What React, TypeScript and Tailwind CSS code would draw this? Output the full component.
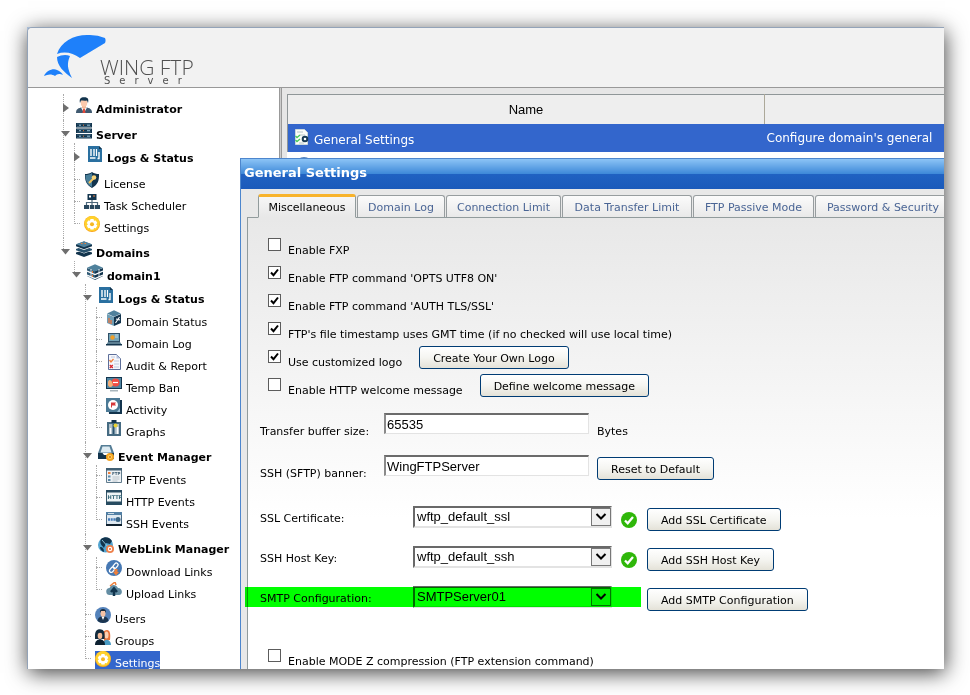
import type { ReactNode } from "react";

const navy = "#12344d";
const steel = "#4f819c";
const blue = "#2a70a0";
const orange = "#ee7f3b";

function Icon({ children }: { children: ReactNode }) {
  return (
    <svg viewBox="0 0 16 16" className="block h-4 w-4 shrink-0" aria-hidden="true">
      {children}
    </svg>
  );
}

const icons: Record<string, ReactNode> = {
  admin: (
    <>
      <path d="M0 16c0-3 1-4.500 5-5.500h6c4 1 5 2.500 5 5.500z" fill="#405a70" />
      <path d="M5 10.500 8 16l3-5.500z" fill="#fff" />
      <path d="M7.200 11.500h1.600L9.500 16h-3z" fill="#e0483a" />
      <path d="M6 8h4v3l-2 1-2-1z" fill="#f3b795" />
      <ellipse cx="8" cy="5.800" rx="3.300" ry="4" fill="#fbc9ad" />
      <path d="M4 6C3 1.500 5 0 8.500.200 12 .300 13 2 12 6l-1-2.500C9 4 6.500 3.500 5 3.500z" fill={navy} />
    </>
  ),
  server: (
    <>
      {[0, 5.5, 11].map((y) => (
        <g key={y}>
          <rect y={y} width="16" height="4.500" fill={navy} />
          <path d={`M1 ${y + 1}h14M1 ${y + 3.5}h14`} stroke="#557c95" strokeWidth=".6" />
          <path d={`M3 ${y + 2.2}h2M11 ${y + 2.2}h3`} stroke="#9bc4d8" />
          <path d={`M7 ${y + 2.2}h1`} stroke={orange} />
        </g>
      ))}
    </>
  ),
  logs: (
    <>
      <path d="M1 0h11l3 3v13H1z" fill={blue} />
      <path d="M12 0v3h3z" fill={navy} />
      <path d="M4 3v7M7 3v7M3 12h5.500" stroke="#fff" strokeWidth="1.400" />
      <path d="M9.500 3v7" stroke="#fff" strokeWidth="1.200" />
      <path d="M12 6v7M10.500 12.500h2" stroke="#fff" strokeWidth="1.400" />
    </>
  ),
  license: (
    <>
      <path d="M8 0c2 1.500 4.500 2 7 2 .3 7-1.500 11-7 14C2.500 13 .700 9 1 2c2.500 0 5-.500 7-2z" fill={navy} />
      <path d="M8 1C6 2.500 3.500 3 1.500 3 1.500 9 3 12.500 8 15z" fill="#487e99" />
      <path d="m5 11 4.500-4.500" stroke="#f3c45d" strokeWidth="2" />
      <circle cx="10" cy="5.500" r="2.300" fill="#f8d57c" />
    </>
  ),
  scheduler: (
    <>
      <path d="M8 6v4M2.500 11V8.500h11V11M8 8v3" fill="none" stroke="#4d687c" strokeWidth="1.200" />
      <rect x="3.500" width="9" height="6" fill={navy} />
      <path d="M5 1.500h2v2H5z" fill="#fff" />
      <path d="M9 2h2" stroke={orange} />
      <path d="M0 11h5v4H0zM5.800 11h4.500v4H5.800zM11 11h5v4h-5z" fill="#29485f" />
    </>
  ),
  gear: (
    <>
      <circle cx="8" cy="8" r="8" fill="#f9a51c" />
      <circle cx="8" cy="7.600" r="7.500" fill="#ffd12c" />
      <path d="m6.500 3h3l.5 1.700 1.800-.3 1.500 2.600L12 8.300l1.300 1.300-1.500 2.600-1.800-.3-.5 1.600h-3L6 11.900l-1.800.3-1.500-2.600L4 8.300 2.700 7l1.500-2.600 1.800.3z" fill="#fff" />
      <circle cx="8" cy="8.200" r="2" fill="#f6b722" />
    </>
  ),
  domains: (
    <>
      <path d="M0 11.500 8 9l8 2.500v1.500L8 16l-8-3z" fill={navy} />
      <path d="M0 7.800 8 5l8 2.800v1.700L8 12.500 0 9.500z" fill="#fff" />
      <path d="M0 8 8 5l8 3v1.300L8 12 0 9.300z" fill="#27506b" />
      <path d="M0 4 8 0l8 4v2L8 9 0 6z" fill="#fff" />
      <path d="M0 3.500 8 .500l8 3v1.700L8 8.200 0 5.200z" fill={navy} />
      <path d="M0 3.300 8 .300l8 3-8 3z" fill={steel} />
      <path d="M5 2.500h6" stroke={orange} strokeDasharray="1.500 2" />
    </>
  ),
  domain: (
    <>
      <path d="M0 4v8l8 4V7z" fill="#315b75" />
      <path d="M16 4v8l-8 4V7z" fill={navy} />
      <path d="M0 3.800 8 .300l8 3.500-8 3.700z" fill={steel} />
      <path d="m0 7 8 3.500L16 7M0 11l8 3.500 8-3.500" fill="none" stroke="#fff" strokeWidth="1.200" />
      <path d="M4 5v8M12 5v8" stroke="#fff" strokeWidth=".8" />
      <path d="M5.500 7v2M5.500 11v2" stroke={orange} />
    </>
  ),
  status: (
    <>
      <path d="M1 4v9l7 3V7z" fill="#6f9eb5" />
      <path d="M15 4v9l-7 3V7z" fill={navy} />
      <path d="m1 3.500 7-3.300 7 3.300-7 3.300z" fill={steel} />
      <path d="M3 8v5M5 10v4" stroke="#de7748" strokeWidth="1.400" />
      <path d="m9.500 13 4-6M10 9l4 1" stroke="#fff" strokeWidth="1.100" />
    </>
  ),
  laptop: (
    <>
      <rect x="2" y="1" width="12" height="9" fill="#2f5067" />
      <rect x="3" y="2" width="10" height="7" fill="#75a5b8" />
      <circle cx="6.500" cy="5.500" r="2.200" fill="#f09d25" />
      <path d="M9 3h3M9 5h3" stroke="#d7e6ec" strokeWidth=".8" />
      <path d="M2 10h12l2 3H0z" fill="#5c7f92" />
      <path d="M0 12h16v1.500H0z" fill={navy} />
    </>
  ),
  audit: (
    <>
      <path d="M2.500.500h8l4 4v11h-12z" fill="#f5f7fc" stroke="#5d6e99" />
      <path d="M10.500.500v4h4z" fill="#b5c2dd" />
      <path d="M8 7h5M8 10h5M8 13h5M5 3h4" stroke="#c0c8dc" />
      <path d="m3.500 6 1.500 2 2.500-3" fill="none" stroke={orange} strokeWidth="1.300" />
      <path d="m3.800 11 3 3m0-3-3 3" stroke="#d7262e" strokeWidth="1.300" />
    </>
  ),
  ban: (
    <>
      <path d="M0 1h16v12H0z" fill={navy} />
      <path d="M1 2h14v10H1z" fill="#4f85a2" />
      <path d="M4 14h8v1.500H4z" fill="#a9b6bd" />
      <circle cx="9.500" cy="6.500" r="4" fill="#f14d43" />
      <path d="M7 6.500h5" stroke="#fff" strokeWidth="1.200" />
      <path d="M2 6c1-3 3-2 4 0l1 3c-1 2.500-4 3-5 0z" fill="#f4ae77" />
    </>
  ),
  activity: (
    <>
      <path d="M2 2h14v14H3z" fill={navy} />
      <path d="M0 0h14v14H0z" fill="#4b7995" />
      <path d="m11 14 3-4v4z" fill="#9dc1d7" />
      <circle cx="7" cy="7" r="5" fill="#fff" />
      <path d="M5.500 4.500v5" stroke="#d6393b" />
      <path d="M6 4.500h4l-1 1.500 1 1.500H6z" fill="#d6393b" />
    </>
  ),
  graphs: (
    <>
      <path d="M1 2h14v14H1z" fill="#466b82" />
      <path d="M3 4h10v10H3z" fill="#aebfc9" />
      <path d="M5.500 0h5v3h-5z" fill={navy} />
      <path d="M4.500 14V8M11.500 14V7" stroke="#fff" strokeWidth="1.500" />
      <path d="M7.500 14V4" stroke="#29536f" strokeWidth="2" />
      <circle cx="9.500" cy="5.500" r="2" fill="#ead332" />
    </>
  ),
  events: (
    <>
      <path d="M3 0h10l3 8H0z" fill="#557d95" />
      <path d="M4.500 1.500h7l2 6h-11z" fill="#dceaf1" />
      <path d="M0 8h4.500l1.500 2h4l1.500-2H16v6H0z" fill={navy} />
      <circle cx="12" cy="12" r="4" fill="#f3a323" />
      <circle cx="12" cy="12" r="2" fill="#ffd85e" />
      <circle cx="12" cy="12" r="1" fill="#d5681f" />
    </>
  ),
  ftp: (
    <>
      <path d="M.500.500h15v14H.500z" fill="#eef2f5" stroke="#617b8c" />
      <path d="M0 0h16v2.500H0z" fill="#405f73" />
      <path d="M2 5h2.500" stroke={orange} strokeWidth="2" />
      <path d="M2 8.500h2.500M2 12h2.500" stroke="#5a89aa" strokeWidth="2" />
      <path d="M6.500 9h7M6.500 11h7M6.500 13h5" stroke="#aebac2" strokeWidth=".8" />
      <text x="6" y="7" fontSize="4" fontWeight="700" fontFamily="DejaVu Sans" fill="#405f73">FTP</text>
    </>
  ),
  http: (
    <>
      <path d="M.500.500h15v14H.500z" fill="#eef4f5" stroke="#365669" />
      <path d="M0 0h16v2.500H0zM0 11.500h16V15H0z" fill="#274b60" />
      <text x="1.500" y="8.500" fontSize="5" fontWeight="700" fontFamily="DejaVu Sans" fill="#366779">HTTP</text>
    </>
  ),
  ssh: (
    <>
      <path d="M.500.500h15v12H.500z" fill="#dfe9f1" stroke="#4b6b85" />
      <path d="M0 0h16v3H0z" fill="#5280a5" />
      <path d="M0 12h16v2H0z" fill="#0f202e" />
      <path d="M2 7.500h8" stroke="#4279b9" strokeWidth="2.500" strokeDasharray="2 .7" />
      <circle cx="12" cy="7.500" r="2.500" fill="#3b6585" />
      <path d="M2 1.500h6" stroke="#fff" strokeWidth=".7" />
    </>
  ),
  weblink: (
    <>
      <circle cx="7.500" cy="8" r="7.500" fill="#51a3cf" />
      <path d="M3 2C7-1 12 0 14 4l-2 3-4-1-2 5C4 8 1 7 3 2z" fill={navy} />
      <path d="M2 10c3 0 4 2 4 5-2-1-4-2-4-5z" fill={navy} />
      <path d="m4 3 7 8" stroke="#a4daf0" strokeWidth=".8" />
      <circle cx="12" cy="12" r="4" fill="#ee804b" />
      <circle cx="12" cy="12" r="2.200" fill="#fff" />
      <circle cx="12" cy="12" r="1" fill="#e46434" />
    </>
  ),
  download: (
    <>
      <circle cx="8" cy="8" r="8" fill="#4678b3" />
      <g fill="none" stroke="#fff" strokeWidth="1.300">
        <rect x="3" y="8" width="6" height="3.500" rx="1.700" transform="rotate(-50 6 9.700)" />
        <rect x="6.500" y="4" width="6" height="3.500" rx="1.700" transform="rotate(-50 9.500 5.700)" />
      </g>
      <path d="M8.500 9h3v3H13l-3 3.500L7 12h1.500z" fill={orange} />
    </>
  ),
  upload: (
    <>
      <path d="M4 13a3.500 3.500 0 0 1-.5-7C5 2 10 2 12 6c5 0 5 7 1 7z" fill="#638da3" />
      <path d="M8 14V8M5 10l3-3.500 3 3.500" fill="none" stroke={navy} strokeWidth="2.500" />
      <path d="m4 4 5-4 1 3" fill="none" stroke={orange} strokeWidth="1.500" />
    </>
  ),
  user: (
    <>
      <circle cx="8" cy="8" r="8" fill="#5482ba" />
      <path d="M2.500 14c.3-3 2-4 4-4.500h3c2 .5 3.700 1.500 4 4.500-3 2.500-8 2.500-11 0z" fill="#1b3550" />
      <path d="M6.500 9.500 8 13l1.500-3.500z" fill="#fff" />
      <ellipse cx="8" cy="6.500" rx="2.500" ry="3.200" fill="#f6c3a5" />
      <path d="M5 6c-.5-3 1-4 3-4s3.500 1 3 4l-1-2H6z" fill="#1b2d3d" />
    </>
  ),
  groups: (
    <>
      <path d="M9 2c5-3 7 0 6 9l-6 1z" fill="#e8733a" />
      <ellipse cx="11.500" cy="6" rx="2" ry="3.500" fill="#fbd0b2" />
      <path d="M8 16c0-3 1-4.500 3.500-5.500 3 1 4.500 2.500 4.500 5.500z" fill="#4a9cc4" />
      <path d="M0 10C-.5 3 1 .500 5 .300 9 .500 10 3 9.500 10z" fill="#132b3d" />
      <ellipse cx="5" cy="6.500" rx="2.300" ry="3.500" fill="#f5bd9b" />
      <path d="M2.500 6C3 3 7 3 7.700 6V3L5 1 2.500 3z" fill="#132b3d" />
      <path d="M0 16c0-4 2-5 5-6 3 1 5 2 5 6z" fill="#0d2131" />
    </>
  ),
  page: (
    <>
      <path d="M1.500.500h9l3 3v12h-12z" fill="#fbfdf9" stroke="#ccd8dc" />
      <path d="M3 3h6M6 6h5M5 14h5" stroke="#b6c4c9" />
      <path d="m1.500 7 1.500 1.500L6 6M1.500 11 3 12.500 6 10" fill="none" stroke="#48c858" strokeWidth="1.300" />
      <circle cx="11" cy="10" r="2.300" fill="#fff" stroke="#183b55" strokeWidth="2" />
    </>
  ),
};

type Node = { label: string; icon: string; open?: boolean; folder?: boolean; selected?: boolean; items?: Node[] };

const leaf = (label: string, icon: string): Node => ({ label, icon });

const tree: Node[] = [
  { label: "Administrator", icon: "admin", folder: true },
  {
    label: "Server", icon: "server", folder: true, open: true,
    items: [
      { label: "Logs & Status", icon: "logs", folder: true },
      leaf("License", "license"),
      leaf("Task Scheduler", "scheduler"),
      leaf("Settings", "gear"),
    ],
  },
  {
    label: "Domains", icon: "domains", folder: true, open: true,
    items: [
      {
        label: "domain1", icon: "domain", folder: true, open: true,
        items: [
          {
            label: "Logs & Status", icon: "logs", folder: true, open: true,
            items: [
              leaf("Domain Status", "status"),
              leaf("Domain Log", "laptop"),
              leaf("Audit & Report", "audit"),
              leaf("Temp Ban", "ban"),
              leaf("Activity", "activity"),
              leaf("Graphs", "graphs"),
            ],
          },
          {
            label: "Event Manager", icon: "events", folder: true, open: true,
            items: [leaf("FTP Events", "ftp"), leaf("HTTP Events", "http"), leaf("SSH Events", "ssh")],
          },
          {
            label: "WebLink Manager", icon: "weblink", folder: true, open: true,
            items: [leaf("Download Links", "download"), leaf("Upload Links", "upload")],
          },
          leaf("Users", "user"),
          leaf("Groups", "groups"),
          { label: "Settings", icon: "gear", selected: true },
        ],
      },
    ],
  },
];

function Branch({ nodes }: { nodes: Node[] }) {
  return (
    <ul>
      {nodes.map((n) => (
        <li
          key={n.label}
          className="relative before:absolute before:top-0 before:left-[2px] before:h-full before:border-l before:border-dotted before:border-[#aaa] last:before:h-[11px]"
        >
          {n.folder ? (
            <div className={n.open ? "flex h-[23px] items-start" : "flex h-[26px] items-start"}>
              <button type="button" aria-label={`Toggle ${n.label}`} className="relative mt-[9px] mr-[5px]">
                <svg viewBox="0 0 10 10" className="block h-[10px] w-[10px]" aria-hidden="true">
                  <path d={n.open ? "M0 2h9L4.500 7.500z" : "M2 .500v9L8 5z"} fill="#6e6e6e" />
                </svg>
              </button>
              <a href="#" className="mt-[3px] flex items-start gap-1 font-bold">
                <Icon>{icons[n.icon]}</Icon>
                <span className="pt-[6px] whitespace-nowrap">{n.label}</span>
              </a>
            </div>
          ) : (
            <div className="flex h-[22px] items-start pl-[2px]">
              <span className="mt-[10px] mr-1 w-[6px] border-t border-dotted border-[#aaa]" />
              <a
                href="#"
                className={
                  n.selected
                    ? "mt-[3px] flex items-start gap-1 bg-[#3366cc] pb-1 text-white"
                    : "mt-[3px] flex items-start gap-1"
                }
              >
                <Icon>{icons[n.icon]}</Icon>
                <span className="pt-[6px] whitespace-nowrap">{n.label}</span>
              </a>
            </div>
          )}
          {n.items && (
            <div className={n.label === "Domains" ? "pl-[11px]" : "pb-[3px] pl-[11px]"}>
              <Branch nodes={n.items} />
            </div>
          )}
        </li>
      ))}
    </ul>
  );
}

function Btn({ children }: { children: ReactNode }) {
  return (
    <button
      type="button"
      className="h-[23px] shrink-0 rounded-[3px] border border-[#003c74] bg-linear-to-b from-white via-[#f5f5f1] to-[#e4e2d8] px-[13px] pt-px whitespace-nowrap"
    >
      {children}
    </button>
  );
}

function Check({ id, label, checked = false, children }: { id: string; label: string; checked?: boolean; children?: ReactNode }) {
  return (
    <div className="flex h-[28px] items-start pl-2">
      <span className="relative mt-1 block h-[13px] w-[13px] shrink-0">
        <input
          id={id}
          type="checkbox"
          defaultChecked={checked}
          className="peer block h-[13px] w-[13px] appearance-none border border-[#5c5c5c] bg-white"
        />
        <svg
          viewBox="0 0 13 13"
          className="pointer-events-none absolute inset-0 hidden h-[13px] w-[13px] peer-checked:block"
          aria-hidden="true"
        >
          <path d="m3 6.500 2.500 2.700L10 3.500" fill="none" stroke="#000" strokeWidth="2" />
        </svg>
      </span>
      <label htmlFor={id} className="ml-[7px] pt-[10px] pr-[17px] whitespace-nowrap">{label}</label>
      {children}
    </div>
  );
}

function TextRow({ id, label, value, children }: { id: string; label: string; value: string; children: ReactNode }) {
  return (
    <div className="flex h-[42px] items-start">
      <label htmlFor={id} className="w-[124px] shrink-0 pt-[12px] whitespace-nowrap">{label}</label>
      <input
        id={id}
        type="text"
        defaultValue={value}
        className="mr-2 h-[21px] w-[205px] border-t-2 border-r border-b border-l-2 border-t-[#6b6b6b] border-r-[#e3e3e3] border-b-[#e3e3e3] border-l-[#8a8a8a] bg-white pl-px font-['Liberation_Sans',Arial,sans-serif] text-[13px]"
      />
      {children}
    </div>
  );
}

function SelectRow({ id, label, value, ok = false, button }: { id: string; label: string; value: string; ok?: boolean; button: string }) {
  return (
    <div className="relative flex h-[40px] items-start">
      <label htmlFor={id} className="w-[153px] shrink-0 pt-[6px] whitespace-nowrap">{label}</label>
      <div className="relative h-[22px] w-[199px] shrink-0">
        <select
          id={id}
          defaultValue={value}
          className="block h-[22px] w-full appearance-none border-2 border-t-[#696969] border-r-[#e3e3e3] border-b-[#e3e3e3] border-l-[#696969] bg-white pl-[2px] font-['Liberation_Sans',Arial,sans-serif] text-[13px] leading-[18px]"
        >
          <option>{value}</option>
        </select>
        <span className="pointer-events-none absolute top-[2px] right-px flex h-[18px] w-[20px] items-center justify-center border border-[#777] bg-[#f0f0f0]">
          <svg viewBox="0 0 12 8" className="h-[8px] w-[12px]" aria-hidden="true">
            <path d="m1.500 1 4.500 4.500L10.500 1" fill="none" stroke="#000" strokeWidth="2" />
          </svg>
        </span>
      </div>
      <span className="mx-[9px] mt-[6px] h-4 w-[17px] shrink-0">
        {ok && (
          <Icon>
            <circle cx="8" cy="8" r="8" fill="#2fb70a" />
            <path d="m4 8.500 2.700 2.700L12 5" fill="none" stroke="#fff" strokeWidth="2.300" />
          </Icon>
        )}
      </span>
      <div className="pt-[2px]"><Btn>{button}</Btn></div>
      {!ok && <span className="pointer-events-none absolute top-px -left-[15px] h-5 w-[396px] bg-[#00ff00] mix-blend-multiply" />}
    </div>
  );
}

const tabs = [
  { label: "Domain Log", width: "w-[88px]" },
  { label: "Connection Limit", width: "w-[115px]" },
  { label: "Data Transfer Limit", width: "w-[130px]" },
  { label: "FTP Passive Mode", width: "w-[121px]" },
  { label: "Password & Security", width: "w-[136px]" },
];

function SettingsWindow() {
  return (
    <section
      aria-label="General Settings"
      className="absolute top-[130px] right-0 bottom-0 left-[212px] flex flex-col overflow-hidden border-t border-l border-[#4d86cd] bg-[#e8e8e8]"
    >
      <h2 className="h-[30px] shrink-0 bg-[linear-gradient(#8cc4f6,#3d88d8_50%,#2062c2_51%,#1b5aba)] pl-[3px] text-[13px] leading-[27px] font-bold text-white">
        General Settings
      </h2>
      <div role="tablist" className="relative z-10 flex shrink-0 items-end gap-px pt-[5px] pl-[17px]">
        <button
          type="button"
          role="tab"
          aria-selected="true"
          className="-mb-px h-[24px] w-[98px] shrink-0 rounded-t-[3px] border border-t-[3px] border-[#919b9c] border-t-[#f8b32b] border-b-[#e8e8e8] bg-linear-to-b from-[#f6f6f6] to-[#e8e8e8] whitespace-nowrap"
        >
          Miscellaneous
        </button>
        {tabs.map((t) => (
          <button
            key={t.label}
            type="button"
            role="tab"
            aria-selected="false"
            className={`${t.width} h-[22px] shrink-0 rounded-t-[3px] border border-b-0 border-[#979d9f] bg-linear-to-b from-[#fbfbfb] to-[#e9e9e9] pt-px whitespace-nowrap text-[#4a6595]`}
          >
            {t.label}
          </button>
        ))}
      </div>
      <form className="ml-[6px] flex-1 border-t border-l border-[#919b9c] bg-[linear-gradient(#e8e8e8,#fff_300px)] pt-4 pl-3">
        <Check id="fxp" label="Enable FXP" />
        <Check id="utf8" label="Enable FTP command 'OPTS UTF8 ON'" checked />
        <Check id="tls" label="Enable FTP command 'AUTH TLS/SSL'" checked />
        <Check id="gmt" label="FTP's file timestamp uses GMT time (if no checked will use local time)" checked />
        <Check id="logo" label="Use customized logo" checked>
          <Btn>Create Your Own Logo</Btn>
        </Check>
        <Check id="welcome" label="Enable HTTP welcome message">
          <Btn>Define welcome message</Btn>
        </Check>
        <div className="pt-[11px] pb-[9px]">
          <TextRow id="buffer" label="Transfer buffer size:" value="65535">
            <span className="pt-[12px]">Bytes</span>
          </TextRow>
          <TextRow id="banner" label="SSH (SFTP) banner:" value="WingFTPServer">
            <div className="pt-[2px]"><Btn>Reset to Default</Btn></div>
          </TextRow>
        </div>
        <SelectRow id="ssl" label="SSL Certificate:" value="wftp_default_ssl" ok button="Add SSL Certificate" />
        <SelectRow id="ssh" label="SSH Host Key:" value="wftp_default_ssh" ok button="Add SSH Host Key" />
        <SelectRow id="smtp" label="SMTP Configuration:" value="SMTPServer01" button="Add SMTP Configuration" />
        <div className="pt-[19px]">
          <Check id="modez" label="Enable MODE Z compression (FTP extension command)" />
        </div>
      </form>
    </section>
  );
}

export default function App() {
  return (
    <div className="h-screen overflow-hidden bg-white pt-[27px] pr-[26px] pb-[26px] pl-[27px] font-['DejaVu_Sans',Verdana,sans-serif] text-[11px] leading-[13px] text-black">
      <div className="h-full bg-[#a9bdd6] shadow-[1px_4px_20px_rgba(0,0,0,0.75)]">
        <div className="relative flex h-full flex-col overflow-hidden rounded-tl-[5px] border-t border-l border-[#93a3b8] bg-[#e6e6e6]">
          <header className="flex h-[60px] shrink-0 border-b border-[#999] bg-[#f2f2f2] pl-4">
            <svg viewBox="0 0 62 44" className="mt-[6px] h-[44px] w-[62px] shrink-0" aria-hidden="true">
              <path d="M13 20C17 7 31 0 46 1q8 0 15 3c1 2 .5 4 0 5L36 24c-7-5-15-7-23-4z" fill="#1e80fa" />
              <path d="M13 23c4-2 9-3 13-1-3 7-3 12 2 22C20 38 13 32 13 23z" fill="#1e80fa" />
              <path d="M0 42c2-5 9-8 13-6 3 1 5 3 6 5-4-2-6-1-8 1-3-2-7-2-11 0z" fill="#1e80fa" />
            </svg>
            <div className="-ml-[6px] pt-[30px] text-[#505050]">
              <div className="font-['Open_Sans',sans-serif] text-[21px] leading-[18px] font-light whitespace-nowrap">WING FTP</div>
              <div className="pl-1 text-[10px] leading-[10px] tracking-[9px]">Server</div>
            </div>
          </header>
          <div className="flex min-h-0 flex-1">
            <nav className="w-[251px] shrink-0 overflow-hidden bg-white pt-[6px] pl-[33px]">
              <Branch nodes={tree} />
            </nav>
            <div className="w-[3px] shrink-0 border-x border-[#999] bg-[#ccc]" />
            <main className="min-w-0 flex-1 pt-[6px] pl-[5px]">
              <table className="w-full table-fixed border-collapse border-t border-l border-[#8f9698] bg-white text-[12px]">
                <colgroup>
                  <col className="w-[477px]" />
                  <col />
                </colgroup>
                <thead>
                  <tr className="h-[29px] bg-[#eee]">
                    <th className="border-r border-[#aca899] font-['Liberation_Sans',Arial,sans-serif] text-[13px] font-normal">Name</th>
                    <th aria-label="Description" />
                  </tr>
                </thead>
                <tbody>
                  <tr className="h-[28px] bg-[#3366cc] text-white">
                    <td className="pl-[6px]">
                      <span className="flex items-start gap-1">
                        <Icon>{icons.page}</Icon>
                        <span className="pt-[5px]">General Settings</span>
                      </span>
                    </td>
                    <td className="overflow-hidden pt-[2px] pl-[2px] whitespace-nowrap">Configure domain's general</td>
                  </tr>
                </tbody>
              </table>
              <div className="h-[10px] bg-white pt-[5px] pl-[9px]"><Icon>{icons.user}</Icon></div>
            </main>
          </div>
          <SettingsWindow />
        </div>
      </div>
    </div>
  );
}
